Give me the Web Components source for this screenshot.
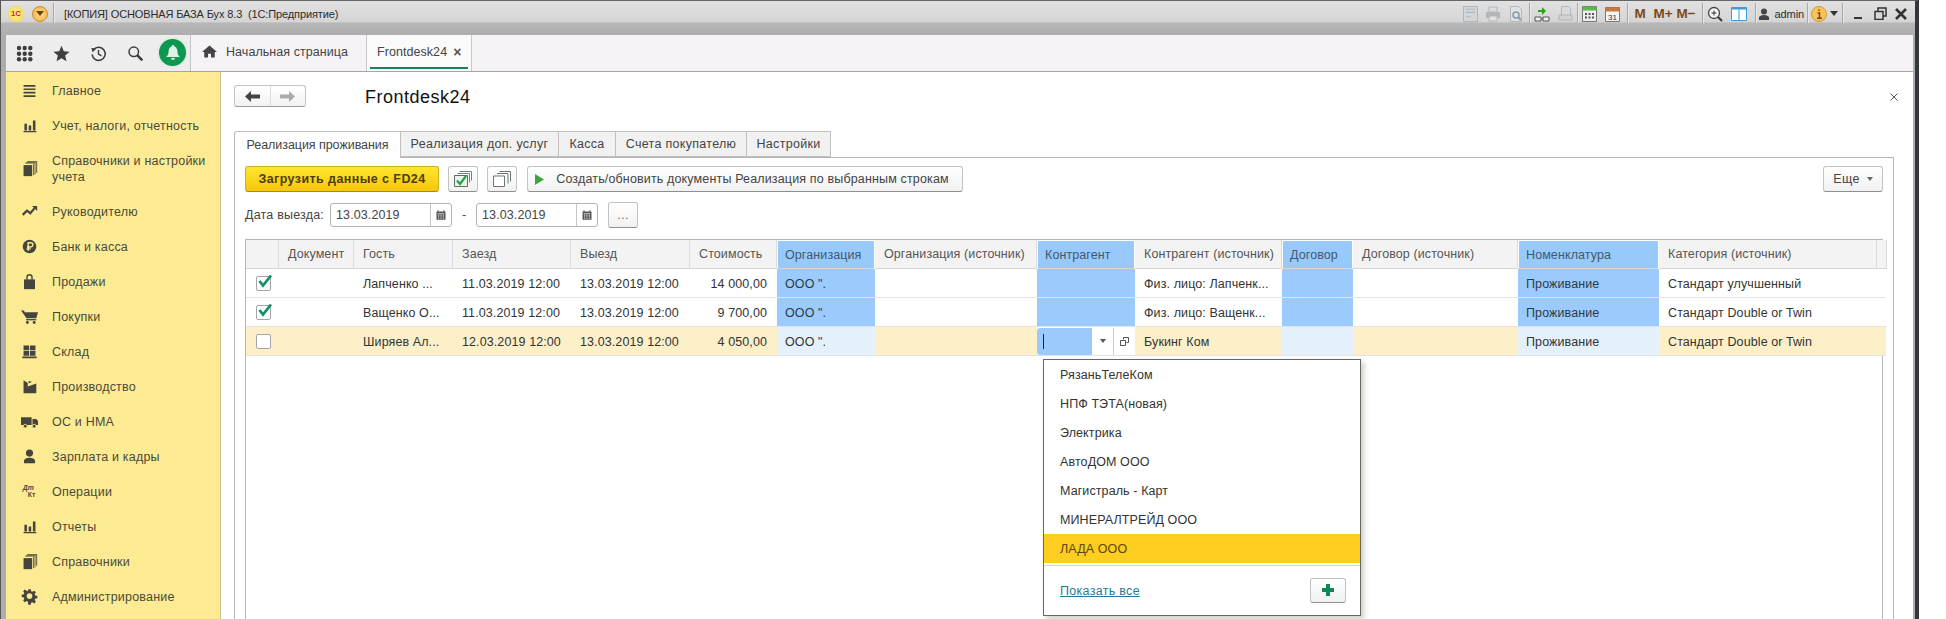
<!DOCTYPE html>
<html lang="ru">
<head>
<meta charset="utf-8">
<title>Frontdesk24</title>
<style>
  html, body { margin: 0; height: 619px; overflow: hidden; background: #fff; }
  body { font-family: "Liberation Sans", Arial, sans-serif; font-size: 12.5px; color: #333; }
</style>
</head>
<body>
<app-window>
  <title-bar slot="title">[КОПИЯ] ОСНОВНАЯ БАЗА Бух 8.3&nbsp; (1С:Предприятие)</title-bar>
  <section-bar slot="sections"></section-bar>
  <side-nav slot="nav">
    <nav-item icon="lines">Главное</nav-item>
    <nav-item icon="bars">Учет, налоги, отчетность</nav-item>
    <nav-item icon="books" two>Справочники и настройки учета</nav-item>
    <nav-item icon="trend">Руководителю</nav-item>
    <nav-item icon="ruble">Банк и касса</nav-item>
    <nav-item icon="bag">Продажи</nav-item>
    <nav-item icon="cart">Покупки</nav-item>
    <nav-item icon="stock">Склад</nav-item>
    <nav-item icon="factory">Производство</nav-item>
    <nav-item icon="truck">ОС и НМА</nav-item>
    <nav-item icon="person">Зарплата и кадры</nav-item>
    <nav-item icon="dtkt">Операции</nav-item>
    <nav-item icon="bars">Отчеты</nav-item>
    <nav-item icon="books">Справочники</nav-item>
    <nav-item icon="gear">Администрирование</nav-item>
  </side-nav>
  <form-page slot="main" heading="Frontdesk24">
    <form-tabs>
      <form-tab active width="167">Реализация проживания</form-tab>
      <form-tab width="158">Реализация доп. услуг</form-tab>
      <form-tab width="57">Касса</form-tab>
      <form-tab width="131">Счета покупателю</form-tab>
      <form-tab width="84">Настройки</form-tab>
    </form-tabs>
    <form-panel>
      <div slot="commands" style="display:flex;gap:9px;align-items:center">
        <form-button kind="primary" width="194">Загрузить данные с FD24</form-button>
        <form-button icon="checkAll" width="30"></form-button>
        <form-button icon="copyAll" width="30" style="margin-right:1px"></form-button>
        <form-button icon="play" width="436" tight>Создать/обновить документы Реализация по выбранным строкам</form-button>
        <form-button caret width="60" style="margin-left:auto">Еще</form-button>
      </div>
      <div slot="filters" style="display:flex;align-items:center">
        <span style="margin-right:6px;letter-spacing:.2px">Дата выезда:</span>
        <date-field value="13.03.2019"></date-field>
        <span style="width:24px;text-align:center">-</span>
        <date-field value="13.03.2019"></date-field>
        <form-button width="30" style="margin-left:10px;color:#777">...</form-button>
      </div>
      <data-table slot="table">
        <choice-popup>
          <choice-item>РязаньТелеКом</choice-item>
          <choice-item>НПФ ТЭТА(новая)</choice-item>
          <choice-item>Электрика</choice-item>
          <choice-item>АвтоДОМ ООО</choice-item>
          <choice-item>Магистраль - Карт</choice-item>
          <choice-item>МИНЕРАЛТРЕЙД ООО</choice-item>
          <choice-item selected>ЛАДА ООО</choice-item>
        </choice-popup>
      </data-table>
    </form-panel>
  </form-page>
</app-window>

<script>
// icon set, everything on a 20x20 box unless the caller says otherwise
const ICONS = {
  lines: '<path d="M3 3.5h14v2H3zM3 7.5h14v2H3zM3 11.5h14v2H3zM3 15.5h14v2H3z"/>',
  bars: '<path d="M4 8h3v8H4zM9 10h3v6H9zM14 4h3v12h-3zM3 16.5h15v1.5H3z"/>',
  books: '<path d="M3 6h10v13H3z"/><path d="M14 5h1v13h-1zM5 4h11v13h1V3H5zM7 1.5h12V15h-1V2.5H7z"/>',
  trend: '<path d="M2 14l5-5 4 3 5-6" fill="none" stroke="currentColor" stroke-width="2.6"/><path d="M13 3.500h6v6z"/>',
  ruble: '<circle cx="10" cy="10" r="8"/><path d="M8.500 15V5.500h3a2.300 2.300 0 0 1 0 5h-4.500M6.500 12.800h5" fill="none" stroke="#fdeb94" stroke-width="1.700"/>',
  bag: '<path d="M3.500 7.500h13V19h-13z"/><path d="M7 8V5a3 3 0 0 1 6 0v3" fill="none" stroke="currentColor" stroke-width="1.600"/>',
  cart: '<path d="M0 3h3.500l.8 2H20l-2 7H6.500z"/><path d="M6 13h12v1.500H6z"/><circle cx="7.500" cy="17" r="1.700"/><circle cx="15.500" cy="17" r="1.700"/>',
  stock: '<path d="M3 3h6.500v5.500H3zM10.500 3H17v5.500h-6.500zM3 9.500h6.500V15H3zM10.500 9.500H17V15h-6.500zM1.500 16H18.500v2H1.500z"/>',
  factory: '<path d="M3 18V2.500l5 3.500v4l10-3.500V18z"/><path d="M9 3.500l4 1-4 2z"/>',
  truck: '<path d="M0 5h12.500v9H0zM13.500 7H18l2.500 3v4h-7z"/><circle cx="5" cy="15.500" r="2.200" stroke="#fdeb94"/><circle cx="15.500" cy="15.500" r="2.200" stroke="#fdeb94"/>',
  person: '<circle cx="10" cy="6" r="4.200"/><path d="M3.500 18v-2.500c0-3 3.500-4 6.500-4s6.500 1 6.500 4V18z"/>',
  dtkt: '<text x="2" y="8" font-size="8" font-weight="700" font-style="italic" font-family="Liberation Sans">Дт</text><text x="8" y="17" font-size="8" font-weight="700" font-family="Liberation Sans">Кт</text>',
  gear: '<path fill-rule="evenodd" d="M8.500 2h3l.5 2.600 1.600.7 2.200-1.500 2.100 2.100-1.500 2.200.7 1.600 2.600.5v3l-2.600.5-.7 1.600 1.500 2.200-2.100 2.100-2.200-1.500-1.600.7-.5 2.600h-3L8 17.400l-1.600-.7-2.200 1.500-2.100-2.100 1.500-2.200-.7-1.600-2.600-.5v-3l2.600-.5.7-1.600-1.500-2.200 2.100-2.100 2.200 1.500L8 4.600zM10 7a3.500 3.500 0 1 0 0 7 3.500 3.500 0 0 0 0-7z" transform="translate(.5 -.5) scale(.95)"/>',
  apps: '<g><circle cx="3" cy="3" r="2.200"/><circle cx="8.700" cy="3" r="2.200"/><circle cx="14.300" cy="3" r="2.200"/><circle cx="3" cy="8.700" r="2.200"/><circle cx="8.700" cy="8.700" r="2.200"/><circle cx="14.300" cy="8.700" r="2.200"/><circle cx="3" cy="14.300" r="2.200"/><circle cx="8.700" cy="14.300" r="2.200"/><circle cx="14.300" cy="14.300" r="2.200"/></g>',
  star: '<path d="M10 1l2.700 6.300 6.800.6-5.200 4.500 1.600 6.600L10 15.500 4.100 19l1.600-6.600L.5 7.900l6.800-.6z"/>',
  history: '<path d="M4.200 5.500A7.700 7.700 0 1 1 2.500 11" fill="none" stroke="currentColor" stroke-width="1.800"/><path d="M1.500 3.500l6 .5-4.500 4.500z"/><path d="M10 6v4.700l3.500 2" fill="none" stroke="currentColor" stroke-width="1.700"/>',
  search: '<circle cx="8" cy="8" r="5.600" fill="none" stroke="currentColor" stroke-width="1.800"/><path d="M12 12l6 6" stroke="currentColor" stroke-width="3"/>',
  home: '<path d="M10 2L0 10.500h3V18h5v-5h4v5h5v-7.500h3z"/>',
  cal: '<rect x="2.500" y="4" width="15" height="14" rx="1.500"/><path d="M5 2v3M15 2v3" stroke="currentColor" stroke-width="1.600"/><path d="M4.500 8h11M5 10.500h2M9 10.500h2M13 10.500h2M5 13h2M9 13h2M13 13h2M5 15.500h2M9 15.500h2M13 15.500h2" stroke="#fff" stroke-width="1.200"/>'
};
const svg = (name, size, box = 20) =>
  `<svg width="${size}" height="${size}" viewBox="0 0 ${box} ${box}" fill="currentColor" aria-hidden="true">${ICONS[name]}</svg>`;

class AppWindow extends HTMLElement {
  constructor() {
    super();
    this.attachShadow({ mode: "open" }).innerHTML = `
      <style>
        :host {
          display: grid;
          grid-template-columns: 215px 1fr;
          grid-template-rows: 34px 37px 547px;
          width: 1919px;
          height: 619px;
          box-sizing: border-box;
          border-left: 1px solid #555;
          border-right: 4px solid #33363a;
          border-top: 1px solid #666;
          padding: 0 2px 0 5px;
          background: #adadad;
          overflow: hidden;
        }
        .title { grid-column: 1 / -1; margin: -1px -2px 0 -5px; }
        .sections { grid-column: 1 / -1; min-width: 0; }
      </style>
      <div class="title"><slot name="title"></slot></div>
      <div class="sections"><slot name="sections"></slot></div>
      <slot name="nav"></slot>
      <slot name="main"></slot>
    `;
  }
}

class TitleBar extends HTMLElement {
  constructor() {
    super();
    const disabled = "color:#b3b6b8";
    this.attachShadow({ mode: "open" }).innerHTML = `
      <style>
        :host {
          display: flex;
          align-items: center;
          height: 35px;
          padding-left: 6px;
          background: linear-gradient(#e2e2e2, #d5d5d5 62%, #b7b7b7 66%, #aeaeae);
          font-family: "Liberation Sans", sans-serif;
          font-size: 11px;
          color: #2c2c2c;
        }
        .logo, .down { width: 16px; height: 16px; border-radius: 50%; margin-top: -8px; flex: none; }
        .logo {
          margin-left: 1px;
          background: radial-gradient(#fff3a0, #f8d23c);
          color: #d3261a;
          font: 700 8px/16px "Liberation Sans", sans-serif;
          text-align: center;
        }
        .down {
          margin-left: 8px;
          background: radial-gradient(#ffdf90, #f2ab3e);
          border: 1px solid #c98e2e;
          box-sizing: border-box;
          display: flex; align-items: center; justify-content: center;
        }
        .down i { border: 4px solid transparent; border-top: 5px solid #6a4510; border-bottom: 0; }
        .text { margin: -8px 0 0 8px; flex: 1; white-space: nowrap; letter-spacing: -.13px; }
        .sep { width: 1px; height: 20px; margin: -10px 2px 0; background: #a9a9a9; box-shadow: 1px 0 #e8e8e8; flex: none; }
        .tools { display: flex; align-items: center; padding-right: 5px; }
        .i { width: 23px; height: 20px; display: flex; align-items: center; justify-content: center; margin-top: -8px; color: #555; flex: none; }
        .m { font: 700 13.5px "Liberation Sans", sans-serif; color: #7a4a20; white-space: nowrap; }
        .who { margin: -8px 1px 0 4px; letter-spacing: -.1px; }
      </style>
      <div class="logo">1С</div>
      <div class="down"><i></i></div>
      <div class="sep" style="margin-left:5px"></div>
      <div class="text"><slot></slot></div>
      <div class="tools">
        <div class="i" style="${disabled}"><svg width="15" height="16" viewBox="0 0 15 15" preserveAspectRatio="none"><path d="M.5.500h14v14H.5z" fill="#d3d6d8" stroke="currentColor"/><path d="M3 3h9M3 6h9M3 10h5" stroke="currentColor"/></svg></div>
        <div class="i" style="${disabled}"><svg width="16" height="16" viewBox="0 0 16 16"><path d="M4 1h8v5H4z" fill="none" stroke="currentColor"/><path d="M1 6h14v6H1z" fill="currentColor"/><path d="M4 10h8v5H4z" fill="#e2e2e2" stroke="currentColor"/></svg></div>
        <div class="i" style="${disabled}"><svg width="15" height="16" viewBox="0 0 15 16"><path d="M1.500.500h8l3 3v12h-11z" fill="#dfe1e2" stroke="currentColor"/><circle cx="7" cy="9" r="3" fill="none" stroke="#8c9aa3" stroke-width="1.500"/><path d="M9 11l3 3" stroke="#8c9aa3" stroke-width="2"/></svg></div>
        <div class="sep" style="margin:-10px 1px 0 1px"></div>
        <div class="i"><svg width="16" height="16" viewBox="0 0 16 16"><path d="M4 4h4V1l4 4-4 4V6H4z" fill="#2f9e1a"/><path d="M1 11h6v4H1zM9 11h6v4H9z" fill="#efefef" stroke="#555"/><path d="M7 13h2" stroke="#555"/></svg></div>
        <div class="i" style="${disabled}"><svg width="15" height="15" viewBox="0 0 15 15"><path d="M3.500.500h7l2 2v8h-9z" fill="#d8dadb" stroke="currentColor"/><path d="M1 9h13v5H1z" fill="#cfd1d2" stroke="currentColor"/></svg></div>
        <div class="sep" style="margin:-10px 0 0 0"></div>
        <div class="i"><svg width="15" height="16" viewBox="0 0 15 16"><path d="M.5.500h14v15H.5z" fill="#eee" stroke="#777"/><path d="M.5.500h14v4H.5z" fill="#58b84c"/><path d="M3 7h2v2H3zM6.500 7h2v2h-2zM10 7h2v2h-2zM3 10.500h2v2H3zM6.500 10.500h2v2h-2zM10 10.500h2v2h-2z" fill="#555"/></svg></div>
        <div class="i"><svg width="15" height="16" viewBox="0 0 15 16"><path d="M.5 1.500h14v14H.5z" fill="#f4f4f4" stroke="#777"/><path d="M.5 1.500h14v4H.5z" fill="#c9793f"/><text x="7.500" y="13.500" text-anchor="middle" font-size="8" font-family="Liberation Sans" fill="#333">31</text></svg></div>
        <div class="sep" style="margin:-10px 1px 0 3px"></div>
        <div class="i m">M</div>
        <div class="i m">M+</div>
        <div class="i m">M−</div>
        <div class="sep" style="margin:-10px 1px 0 4px"></div>
        <div class="i"><svg width="16" height="16" viewBox="0 0 16 16"><circle cx="7" cy="7" r="5.500" fill="#f5f5f5" stroke="#444" stroke-width="1.300"/><path d="M4.500 7h5M7 4.500v5" stroke="#333"/><path d="M11 11l4 4" stroke="#333" stroke-width="2"/></svg></div>
        <div class="i" style="margin-left:1px"><svg width="16" height="16" viewBox="0 0 16 16"><path d="M.5 1.500h15v13H.5z" fill="#fff" stroke="#38a1dc"/><path d="M.5 1.500h15v2H.5z" fill="#38a1dc"/><path d="M8 2v13" stroke="#38a1dc"/></svg></div>
        <div class="sep" style="margin:-10px 1px 0 4px"></div>
        <div class="i" style="width:14px;color:#444"><svg width="12" height="12" viewBox="0 0 12 12" fill="currentColor"><circle cx="6" cy="3.500" r="3"/><path d="M1 12V9.500C1 8 3.500 7 6 7s5 1 5 2.500V12z"/></svg></div>
        <div class="who">admin</div>
        <div class="sep"></div>
        <div class="i" style="width:18px"><svg width="16" height="16" viewBox="0 0 16 16"><circle cx="8" cy="8" r="7.500" fill="#f7c35a" stroke="#d99c2c"/><path d="M8 3.500v1.500M6.500 7H8.500v5M6 12.300h5" stroke="#7a4a10" stroke-width="1.500" fill="none"/></svg></div>
        <div class="i" style="width:12px"><svg width="8" height="5" viewBox="0 0 8 5"><path d="M0 0h8L4 5z" fill="#333"/></svg></div>
        <div class="sep"></div>
        <div class="i" style="margin-left:1px"><svg width="10" height="10" viewBox="0 0 10 10"><path d="M1 8h8v2H1z" fill="#333"/></svg></div>
        <div class="i"><svg width="13" height="13" viewBox="0 0 13 13" fill="none" stroke="#333" stroke-width="1.500"><path d="M1 4.500h8v8H1zM4 4V1h8v8H9.500"/></svg></div>
        <div class="i" style="width:18px"><svg width="12" height="12" viewBox="0 0 12 12"><path d="M1 1l10 10M11 1L1 11" stroke="#333" stroke-width="2.600"/></svg></div>
      </div>
    `;
  }
}

class SectionBar extends HTMLElement {
  constructor() {
    super();
    this.attachShadow({ mode: "open" }).innerHTML = `
      <style>
        :host {
          display: flex;
          height: 37px;
          box-sizing: border-box;
          background: #f5f3f6;
          border-bottom: 1px solid #a6a6a6;
        }
        .tools {
          display: flex;
          align-items: center;
          width: 185px;
          box-sizing: border-box;
          border-right: 1px solid #c4c4c4;
          background: #eeedee;
          color: #3e3e3e;
          position: relative;
        }
        .tools span { width: 37px; display: flex; justify-content: center; flex: none; }
        .bell {
          position: absolute; left: 153px; top: 4px;
          width: 27px; height: 27px; border-radius: 50%;
          background: #0d9850;
          display: flex; align-items: center; justify-content: center;
          box-shadow: 0 0 3px #bcd9c6;
        }
        .tab { display: flex; align-items: center; padding-bottom: 3px; color: #444; white-space: nowrap; letter-spacing: .06px; }
        .home { width: 176px; padding-left: 11px; box-sizing: border-box; border-right: 1px solid #c9c9c9; gap: 9px; }
        .home svg { color: #444; }
        .now { width: 105px; box-sizing: border-box; padding-left: 10px; border-right: 1px solid #c9c9c9; gap: 6px; background: #fbfafb; position: relative; }
        .now::after { content: ""; position: absolute; left: 3px; right: 3px; bottom: 2px; height: 2px; background: #19815f; }
        .x { font-size: 14px; font-weight: 700; color: #555; letter-spacing: 0; }
      </style>
      <div class="tools">
        <span>${svg("apps", 17, 17)}</span>
        <span>${svg("star", 17)}</span>
        <span>${svg("history", 17)}</span>
        <span>${svg("search", 17)}</span>
        <div class="bell"><svg width="16" height="17" viewBox="0 0 16 17"><path d="M8 1a1.500 1.500 0 0 1 1.500 1.500C12 3.500 12.500 6 12.500 8c0 2.500 1 3.500 2.500 5H1c1.500-1.500 2.500-2.500 2.500-5 0-2 .5-4.500 3-5.500A1.500 1.500 0 0 1 8 1z" fill="#dff3e6"/><path d="M6 14h4a2 2 0 0 1-4 0z" fill="#dff3e6"/></svg></div>
      </div>
      <div class="tab home">${svg("home", 15)}<span>Начальная страница</span></div>
      <div class="tab now"><span>Frontdesk24</span><span class="x">×</span></div>
    `;
  }
}

class SideNav extends HTMLElement {
  constructor() {
    super();
    this.attachShadow({ mode: "open" }).innerHTML = `
      <style>
        :host {
          display: block;
          padding-top: 1px;
          background: #fdeb94;
          border-right: 1px solid #c9c08a;
          box-sizing: border-box;
          overflow: hidden;
        }
      </style>
      <slot></slot>
    `;
  }
}

class NavItem extends HTMLElement {
  constructor() {
    super();
    this.attachShadow({ mode: "open" }).innerHTML = `
      <style>
        :host {
          display: flex;
          align-items: center;
          gap: 14px;
          height: 35px;
          padding-left: 15px;
          color: #4a4a3a;
          letter-spacing: .2px;
          line-height: 16px;
        }
        :host([two]) { height: 51px; }
        .icon { width: 17px; height: 17px; flex: none; color: #45453e; display: block; }
        .icon svg { display: block; }
        .label { width: 165px; }
      </style>
      <span class="icon">${svg(this.getAttribute("icon"), 17)}</span>
      <span class="label"><slot></slot></span>
    `;
  }
}

class FormPage extends HTMLElement {
  constructor() {
    super();
    this.attachShadow({ mode: "open" }).innerHTML = `
      <style>
        :host {
          display: block;
          background: #fff;
          padding: 13px 19px 0 13px;
          position: relative;
          overflow: hidden;
        }
        header { display: flex; align-items: center; height: 22px; margin-bottom: 24px; }
        .nav {
          display: flex; width: 72px; height: 22px; box-sizing: border-box;
          border: 1px solid #c4c4c4; border-bottom-color: #9a9a9a; border-radius: 3px;
          background: linear-gradient(#fff, #f2f2f2);
        }
        .nav span { flex: 1; display: flex; align-items: center; justify-content: center; }
        .nav span + span { border-left: 1px solid #ddd; }
        h1 { margin: 3px 0 0 59px; font: 400 18px "Liberation Sans", sans-serif; color: #111; letter-spacing: .5px; }
        .close { position: absolute; right: 15px; top: 21px; width: 8px; height: 8px; }
      </style>
      <header>
        <div class="nav">
          <span><svg width="15" height="11" viewBox="0 0 15 11"><path d="M0 5.500L6 0v3.500h9v4H6V11z" fill="#444"/></svg></span>
          <span><svg width="15" height="11" viewBox="0 0 15 11"><path d="M15 5.500L9 0v3.500H0v4h9V11z" fill="#aaa"/></svg></span>
        </div>
        <h1>${this.getAttribute("heading")}</h1>
      </header>
      <svg class="close" viewBox="0 0 8 8"><path d="M.5.500l7 7M7.500.500l-7 7" stroke="#555" stroke-width="1"/></svg>
      <slot></slot>
    `;
  }
}

class FormTabs extends HTMLElement {
  constructor() {
    super();
    this.attachShadow({ mode: "open" }).innerHTML = `
      <style>
        :host { display: flex; height: 27px; position: relative; z-index: 1; margin-bottom: -1px; }
      </style>
      <slot></slot>
    `;
  }
}

class FormTab extends HTMLElement {
  constructor() {
    super();
    this.attachShadow({ mode: "open" }).innerHTML = `
      <style>
        :host {
          display: flex; align-items: center; justify-content: center;
          width: ${this.getAttribute("width")}px;
          height: 26px; box-sizing: border-box;
          background: #f1f1f1;
          border: 1px solid #c0c0c0; border-left: 0;
          color: #444;
          white-space: nowrap;
          letter-spacing: .3px;
        }
        :host([active]) {
          height: 27px;
          padding-bottom: 1px;
          background: #fff;
          border-left: 1px solid #b5b5b5;
          border-bottom: 0;
          border-radius: 3px 0 0 0;
          letter-spacing: -.05px;
        }
      </style>
      <slot></slot>
    `;
  }
}

class FormPanel extends HTMLElement {
  constructor() {
    super();
    this.attachShadow({ mode: "open" }).innerHTML = `
      <style>
        :host {
          display: block;
          height: 480px;
          box-sizing: border-box;
          border: 1px solid #b5b5b5;
          padding: 8px 10px 0 10px;
          color: #444;
        }
        .filters { margin: 10px 0 11px; height: 26px; }
      </style>
      <slot name="commands"></slot>
      <div class="filters"><slot name="filters"></slot></div>
      <slot name="table"></slot>
    `;
  }
}

class FormButton extends HTMLElement {
  constructor() {
    super();
    const kind = this.getAttribute("icon");
    let glyph = "";
    if (kind === "checkAll") {
      glyph = `<svg width="18" height="16" viewBox="0 0 18 16"><path d="M5.500.500h12v9M3.500 2.500h12v9" fill="none" stroke="#698a7a"/><path d="M.5 4.500h13v11H.5z" fill="#e8f3ec" stroke="#5f6f66"/><path d="M3 9.500l3 3.500 6-8" fill="none" stroke="#28a043" stroke-width="2.200"/></svg>`;
    } else if (kind === "copyAll") {
      glyph = `<svg width="18" height="16" viewBox="0 0 18 16" fill="none" stroke="#6c7478"><path d="M6.500.500h11v10M4 2.500h11v10"/><path d="M.5 5h11v10.500H.5z" fill="#fff"/></svg>`;
    } else if (kind === "play") {
      glyph = `<svg width="9" height="11" viewBox="0 0 9 11"><path d="M0 0l9 5.500L0 11z" fill="#3ca53c"/></svg>`;
    }
    this.attachShadow({ mode: "open" }).innerHTML = `
      <style>
        :host {
          display: inline-flex; align-items: center; justify-content: center;
          flex: none;
          height: 26px; box-sizing: border-box;
          width: ${this.getAttribute("width")}px;
          border: 1px solid #c2c2c2; border-bottom-color: #8f8f8f; border-radius: 3px;
          background: linear-gradient(#fff, #f1f1f1);
          color: inherit;
          white-space: nowrap;
          letter-spacing: .3px;
          gap: 10px;
        }
        :host([tight]) { letter-spacing: .15px; gap: 12px; padding-right: 6px; }
        :host([kind="primary"]) {
          background: linear-gradient(#ffe62f, #f6c60b);
          border-color: #cfae22 #cfae22 #a98a10;
          color: #4d3d05;
          font-weight: 700;
          letter-spacing: .42px;
        }
        .caret { border: 3px solid transparent; border-top: 4px solid #666; border-bottom: 0; margin-left: -3px; }
      </style>
      ${glyph}<slot></slot>${this.hasAttribute("caret") ? '<i class="caret"></i>' : ""}
    `;
  }
}

class DateField extends HTMLElement {
  constructor() {
    super();
    this.attachShadow({ mode: "open" }).innerHTML = `
      <style>
        :host {
          display: inline-flex; flex: none;
          width: 122px; height: 24px; box-sizing: border-box;
          border: 1px solid #b3b3b3; border-radius: 3px;
          background: #fff;
          color: #444;
        }
        .v { flex: 1; padding-left: 5px; line-height: 22px; letter-spacing: .1px; }
        .b { width: 20px; border-left: 1px solid #c6c6c6; display: flex; align-items: center; justify-content: center; color: #555; }
      </style>
      <div class="v">${this.getAttribute("value")}</div>
      <div class="b">${svg("cal", 12)}</div>
    `;
  }
}

const COLUMNS = [33, 75, 99, 118, 119, 87, 98, 162, 98, 147, 71, 165, 141, 218, 5];
const HEADERS = ["", "Документ", "Гость", "Заезд", "Выезд", "Стоимость", "Организация", "Организация (источник)", "Контрагент", "Контрагент (источник)", "Договор", "Договор (источник)", "Номенклатура", "Категория (источник)", ""];
const BLUE = [6, 8, 10, 12];
const ROWS = [
  { on: true, cells: ["", "Лапченко ...", "11.03.2019 12:00", "13.03.2019 12:00", "14 000,00", "ООО \".", "", "", "Физ. лицо: Лапченк...", "", "", "Проживание", "Стандарт улучшенный", ""] },
  { on: true, cells: ["", "Ващенко О...", "11.03.2019 12:00", "13.03.2019 12:00", "9 700,00", "ООО \".", "", "", "Физ. лицо: Ващенк...", "", "", "Проживание", "Стандарт Double or Twin", ""] },
  { on: false, current: true, cells: ["", "Ширяев Ал...", "12.03.2019 12:00", "13.03.2019 12:00", "4 050,00", "ООО \".", "", "", "Букинг Ком", "", "", "Проживание", "Стандарт Double or Twin", ""] }
];

class DataTable extends HTMLElement {
  constructor() {
    super();
    const head = HEADERS.map((h, i) =>
      `<div class="th ${BLUE.includes(i) ? "blue" : ""}">${h}</div>`).join("");
    const body = ROWS.map(row => {
      const box = `<div class="td ${row.current ? "cur" : ""}"><span class="box">${row.on ? '<svg width="16" height="15" viewBox="0 0 16 15"><path d="M2.500 7l3.500 4.500L14 1.500" fill="none" stroke="#13906a" stroke-width="2.800"/></svg>' : ""}</span></div>`;
      const cells = row.cells.map((text, n) => {
        const i = n + 1;
        let cls = "td";
        if (BLUE.includes(i)) cls += row.current ? " pale" : " blue";
        else if (row.current) cls += " cur";
        if (i === 5) cls += " num";
        if (row.current && i === 8) {
          return `<div class="td edit"><span class="inp"><i></i></span><span class="drop"><b></b></span><span class="open"><svg width="9" height="9" viewBox="0 0 9 9" fill="none" stroke="#555"><path d="M3.500 2.500V.500h5v5H6.500M.5 3.500h5v5h-5z"/></svg></span></div>`;
        }
        return `<div class="${cls}">${text}</div>`;
      }).join("");
      return box + cells;
    }).join("");
    this.attachShadow({ mode: "open" }).innerHTML = `
      <style>
        :host {
          display: block; position: relative;
          width: 1638px; height: 400px; box-sizing: border-box;
          border: 1px solid #b5b5b5; border-bottom: 0;
          color: #3b3b3b;
        }
        .grid { display: grid; grid-template-columns: ${COLUMNS.join("px ")}px; grid-auto-rows: 29px; }
        .th, .td { display: flex; align-items: center; padding: 0 0 0 9px; white-space: nowrap; overflow: hidden; box-sizing: border-box; letter-spacing: .1px; }
        .th { height: 29px; background: #f4f3f3; color: #555; border-right: 1px solid #dcdcdc; border-bottom: 1px solid #d5d5d5; }
        .th.blue { background: #98c9fb; border: 1px solid #fff; border-bottom-color: #d5d5d5; color: #3f5970; padding-left: 7px; }
        .td { border-bottom: 1px solid #e3e3e3; background: #fff; color: #333; padding-top: 1px; }
        .td.blue { background: #9bcbfd; color: #2c3a48; }
        .td.cur { background: #fdf0c9; }
        .td.pale { background: #e4f1fd; }
        .td.blue, .td.pale { padding-left: 8px; }
        .td.num { justify-content: flex-end; padding: 1px 10px 0 0; }
        .box { width: 13px; height: 13px; margin-left: 1px; border: 1px solid #a5a5a5; border-radius: 2px; background: #fff; position: relative; flex: none; }
        .box svg { position: absolute; left: 0; top: -3px; }
        .edit { padding: 0; }
        .inp { width: 55px; height: 27px; background: #9bcbfd; border-radius: 3px 0 0 3px; display: flex; align-items: center; padding-left: 6px; box-sizing: border-box; }
        .inp i { width: 1px; height: 15px; background: #222; }
        .drop { width: 21px; display: flex; justify-content: center; }
        .drop b { border: 3px solid transparent; border-top: 4px solid #555; border-bottom: 0; }
        .open { border-left: 1px solid #ccc; height: 27px; width: 21px; display: flex; align-items: center; justify-content: center; }
      </style>
      <div class="grid">${head}${body}</div>
      <slot></slot>
    `;
  }
}

class ChoicePopup extends HTMLElement {
  constructor() {
    super();
    this.attachShadow({ mode: "open" }).innerHTML = `
      <style>
        :host {
          position: absolute; left: 797px; top: 119px;
          width: 318px; height: 257px; box-sizing: border-box;
          display: block;
          background: #fff;
          border: 1px solid #666;
          box-shadow: 3px 3px 5px rgba(90, 80, 40, .28);
        }
        footer {
          margin-top: 2px;
          border-top: 1px solid #d2d2d2;
          display: flex; align-items: center; justify-content: space-between;
          height: 49px; box-sizing: border-box;
          padding: 0 14px 0 16px;
        }
        a { color: #1f7c93; text-decoration: underline; letter-spacing: .3px; margin-top: 1px; }
        .add {
          width: 36px; height: 25px; box-sizing: border-box;
          border: 1px solid #c2c2c2; border-bottom-color: #8f8f8f; border-radius: 3px;
          background: linear-gradient(#fff, #f1f1f1);
          display: flex; align-items: center; justify-content: center;
        }
      </style>
      <slot></slot>
      <footer>
        <a>Показать все</a>
        <span class="add"><svg width="12" height="12" viewBox="0 0 12 12"><path d="M4 0h4v4h4v4H8v4H4V8H0V4h4z" fill="#0d8a55"/></svg></span>
      </footer>
    `;
  }
}

class ChoiceItem extends HTMLElement {
  constructor() {
    super();
    this.attachShadow({ mode: "open" }).innerHTML = `
      <style>
        :host { display: flex; align-items: center; height: 29px; padding-left: 16px; color: #333; letter-spacing: .1px; }
        :host([selected]) { background: #fdcd1f; color: #5a4610; }
      </style>
      <slot></slot>
    `;
  }
}

customElements.define("app-window", AppWindow);
customElements.define("title-bar", TitleBar);
customElements.define("section-bar", SectionBar);
customElements.define("side-nav", SideNav);
customElements.define("nav-item", NavItem);
customElements.define("form-page", FormPage);
customElements.define("form-tabs", FormTabs);
customElements.define("form-tab", FormTab);
customElements.define("form-panel", FormPanel);
customElements.define("form-button", FormButton);
customElements.define("date-field", DateField);
customElements.define("data-table", DataTable);
customElements.define("choice-popup", ChoicePopup);
customElements.define("choice-item", ChoiceItem);
</script>
</body>
</html>
